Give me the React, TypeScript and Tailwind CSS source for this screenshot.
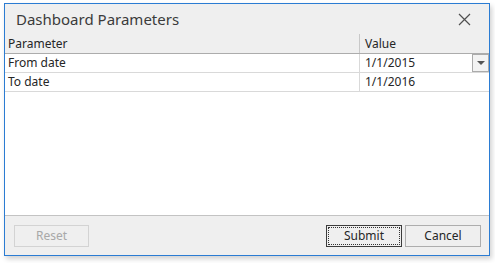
const rows = [
  { name: "From date", value: "1/1/2015", active: true },
  { name: "To date", value: "1/1/2016", active: false },
];

const CloseIcon = () => (
  <svg width="13" height="13" viewBox="0 0 13 13" className="text-[#505050]">
    <path d="M1 1 L12 12 M12 1 L1 12" stroke="currentColor" strokeWidth="1.2" fill="none" />
  </svg>
);

const App = () => {
  return (
    <div
      className="w-[495px] h-[263px] bg-white pt-[3px] pl-[4px]"
      style={{ fontFamily: '"Segoe UI", "Noto Sans", sans-serif' }}
    >
      <div className="w-[486px] h-[253px] border border-[#2b7cd3] bg-[#efefef] flex flex-col shadow-[2px_3px_5px_rgba(0,0,0,0.18)]">
        {/* title bar */}
        <div className="h-[30px] flex items-center justify-between pl-[11px] pr-[18px] shrink-0">
          <span className="text-[15px] text-[#3b3b3b] leading-none">Dashboard Parameters</span>
          <CloseIcon />
        </div>

        {/* grid */}
        <div className="flex-1 bg-white flex flex-col text-[12px] text-[#262626]">
          <div className="h-[20px] bg-[#efefef] border-b border-[#acacac] flex shrink-0">
            <div className="w-[354px] pl-[3px] flex items-center">Parameter</div>
            <div className="flex-1 border-l border-[#c8c8c8] pl-[5px] flex items-center">Value</div>
          </div>
          {rows.map((row) => (
            <div key={row.name} className="h-[19px] border-b border-[#d9d9d9] flex shrink-0">
              <div className="w-[354px] pl-[3px] flex items-center">{row.name}</div>
              <div className="flex-1 border-l border-[#d9d9d9] pl-[5px] flex items-center justify-between">
                <span>{row.value}</span>
                {row.active && (
                  <div className="w-[17px] h-[18px] border border-[#ababab] bg-[#f3f3f3] flex items-center justify-center">
                    <div className="w-0 h-0 border-l-[4px] border-r-[4px] border-t-[4px] border-l-transparent border-r-transparent border-t-[#555]" />
                  </div>
                )}
              </div>
            </div>
          ))}
        </div>

        {/* footer */}
        <div className="h-[40px] border-t border-[#c3c3c3] flex items-center justify-between pl-[9px] pr-[8px] shrink-0 text-[12px]">
          <button className="w-[75px] h-[22px] border border-[#d3d3d3] text-[#a8a8a8] bg-[#efefef]">
            Reset
          </button>
          <div className="flex gap-[3px]">
            <button className="w-[76px] h-[22px] border border-[#3c3c3c] bg-[#efefef] text-[#262626] p-[1px]">
              <span className="w-full h-full border border-dotted border-[#333] flex items-center justify-center">
                Submit
              </span>
            </button>
            <button className="w-[76px] h-[22px] border border-[#adadad] bg-[#efefef] text-[#262626]">
              Cancel
            </button>
          </div>
        </div>
      </div>
    </div>
  );
};

export default App;
